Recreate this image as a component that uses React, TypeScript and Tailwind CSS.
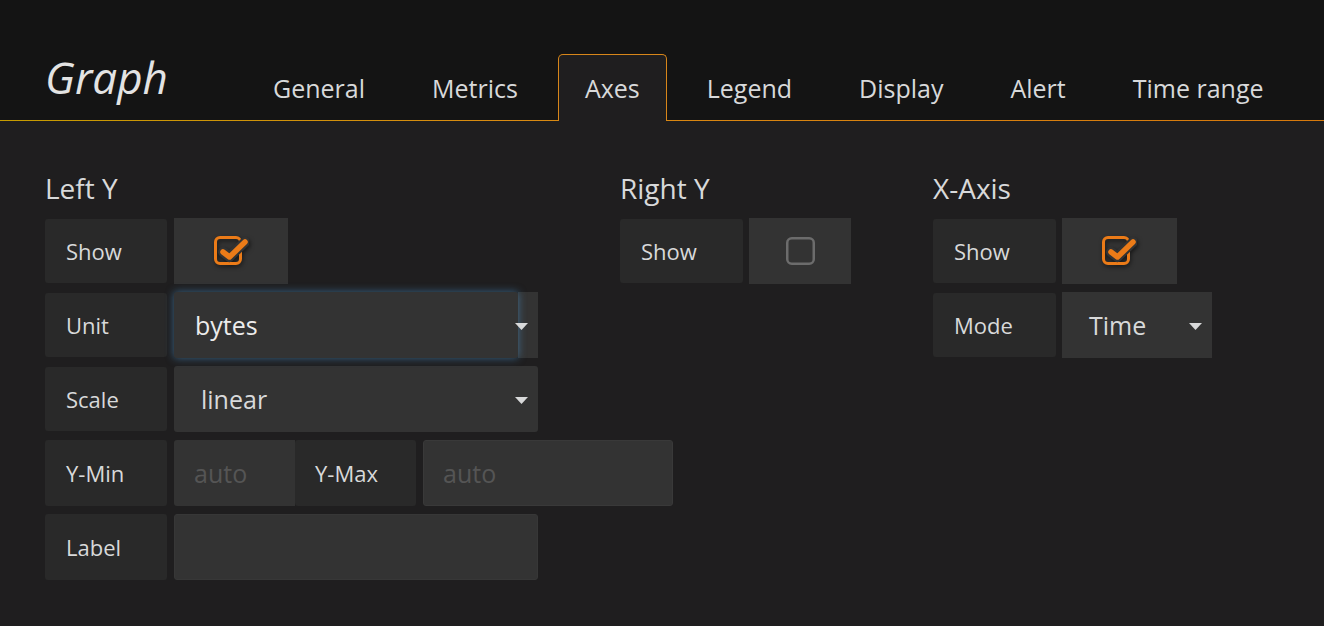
import React from "react";

const ORANGE = "#eb7b18";

function Caret() {
  return (
    <svg
      width="13"
      height="7"
      viewBox="0 0 13 7"
      className="absolute right-[10px] top-[31px] z-20"
    >
      <path d="M0 0H13L6.5 7Z" fill="#d8d9da" />
    </svg>
  );
}

function Checked() {
  return (
    <svg
      width="35"
      height="30"
      viewBox="0 0 35 30"
      className="drop-shadow-[1px_2px_2px_rgba(0,0,0,0.55)]"
    >
      <rect x="1.5" y="1.5" width="25" height="26" rx="4.5" fill="none" stroke={ORANGE} strokeWidth="3" />
      <path d="M9 16 L15.5 21 L31 6" fill="none" stroke="#333333" strokeWidth="10" strokeLinecap="round" strokeLinejoin="round" />
      <path d="M9 16 L15.5 21 L31 6" fill="none" stroke={ORANGE} strokeWidth="5.5" strokeLinecap="round" strokeLinejoin="round" />
    </svg>
  );
}

function Unchecked() {
  return (
    <svg width="29" height="28" viewBox="0 0 29 28">
      <rect x="1.25" y="1.25" width="26.5" height="25.5" rx="4.5" fill="none" stroke="#6c6c6c" strokeWidth="2.5" />
    </svg>
  );
}

function Label({ children, w, inset = false }: { children: React.ReactNode; w: string; inset?: boolean }) {
  return (
    <div
      className={`${w} ${inset ? "my-px" : ""} flex items-center shrink-0 rounded-[3px] bg-[#292929] pl-[21px] text-[22px] text-[#d8d9da]`}
    >
      {children}
    </div>
  );
}

function SectionTitle({ children }: { children: React.ReactNode }) {
  return <div className="mb-[11px] text-[28px] leading-[38px] text-[#d8d9da]">{children}</div>;
}

const tabs = ["General", "Metrics", "Axes", "Legend", "Display", "Alert", "Time range"];

export default function App() {
  return (
    <div className="w-[1324px] h-[626px] overflow-hidden bg-[#1f1e1f] font-['Open_Sans',sans-serif]">
      {/* header */}
      <div className="flex h-[121px] items-end bg-[#141414] border-b border-solid pl-[45px] [border-image:linear-gradient(90deg,#c69c00_0%,#d98a12_40%,#d6790c_100%)_1]">
        <div className="w-[201px] self-end mb-[21px] text-[44px] leading-[44px] italic text-[#e3e3e3]">Graph</div>
        <div className="flex gap-[13px]">
          {tabs.map((t) =>
            t === "Axes" ? (
              <div
                key={t}
                className="relative z-10 -mb-px flex h-[67px] items-center rounded-t-[5px] border border-b-0 border-[#d7861a] bg-[#1f1e1f] px-[26px] text-[25px] leading-[34px] text-[#d8d9da]"
              >
                {t}
              </div>
            ) : (
              <div
                key={t}
                className="flex h-[66px] items-center border-t border-x border-transparent px-[26px] text-[25px] leading-[34px] text-[#d8d9da]"
              >
                {t}
              </div>
            )
          )}
        </div>
      </div>

      {/* body */}
      <div className="flex pl-[45px] pt-[48px]">
        {/* Left Y */}
        <div className="w-[575px] shrink-0">
          <SectionTitle>Left Y</SectionTitle>
          <div className="flex flex-col gap-[8px]">
            <div className="flex h-[66px] gap-[7px]">
              <Label w="w-[122px]" inset>Show</Label>
              <div className="flex w-[114px] items-center justify-center bg-[#333333]">
                <Checked />
              </div>
            </div>
            <div className="flex h-[66px] gap-[7px]">
              <Label w="w-[122px]" inset>Unit</Label>
              <div className="relative flex w-[364px]">
                <div className="relative z-10 flex w-[344px] items-center rounded-[3px] bg-[#333333] pl-[21px] text-[25px] leading-[34px] text-[#ececec] shadow-[0_0_9px_rgba(82,168,236,0.5)]">
                  bytes
                </div>
                <div className="flex-1 bg-[#333333]" />
                <Caret />
              </div>
            </div>
            <div className="flex h-[66px] gap-[7px]">
              <Label w="w-[122px]" inset>Scale</Label>
              <div className="relative flex w-[364px] items-center rounded-[3px] bg-[#333333] pl-[27px] text-[25px] leading-[34px] text-[#d8d9da]">
                linear
                <Caret />
              </div>
            </div>
            <div className="flex h-[66px] gap-[7px]">
              <Label w="w-[122px]">Y-Min</Label>
              <div className="flex">
                <div className="flex w-[121px] items-center rounded-l-[3px] bg-[#333333] pl-[20px] text-[25px] leading-[34px] text-[#555555]">
                  auto
                </div>
                <div className="flex w-[121px] items-center rounded-[3px] bg-[#292929] pl-[20px] text-[22px] text-[#d8d9da]">
                  Y-Max
                </div>
                <div className="ml-[7px] flex w-[250px] items-center rounded-[3px] border border-[#393939] bg-[#333333] pl-[19px] text-[25px] leading-[34px] text-[#555555]">
                  auto
                </div>
              </div>
            </div>
            <div className="flex h-[66px] gap-[7px]">
              <Label w="w-[122px]">Label</Label>
              <div className="w-[364px] rounded-[3px] border border-[#373737] bg-[#333333]" />
            </div>
          </div>
        </div>

        {/* Right Y */}
        <div className="w-[313px] shrink-0">
          <SectionTitle>Right Y</SectionTitle>
          <div className="flex h-[66px] gap-[6px]">
            <Label w="w-[123px]" inset>Show</Label>
            <div className="flex w-[102px] items-center justify-center bg-[#333333]">
              <Unchecked />
            </div>
          </div>
        </div>

        {/* X-Axis */}
        <div className="shrink-0">
          <SectionTitle>X-Axis</SectionTitle>
          <div className="flex flex-col gap-[8px]">
            <div className="flex h-[66px] gap-[6px]">
              <Label w="w-[123px]" inset>Show</Label>
              <div className="flex w-[115px] items-center justify-center bg-[#333333]">
                <Checked />
              </div>
            </div>
            <div className="flex h-[66px] gap-[6px]">
              <Label w="w-[123px]" inset>Mode</Label>
              <div className="relative flex w-[150px] items-center bg-[#333333] pl-[27px] text-[25px] leading-[34px] text-[#d8d9da]">
                Time
                <Caret />
              </div>
            </div>
          </div>
        </div>
      </div>
    </div>
  );
}
